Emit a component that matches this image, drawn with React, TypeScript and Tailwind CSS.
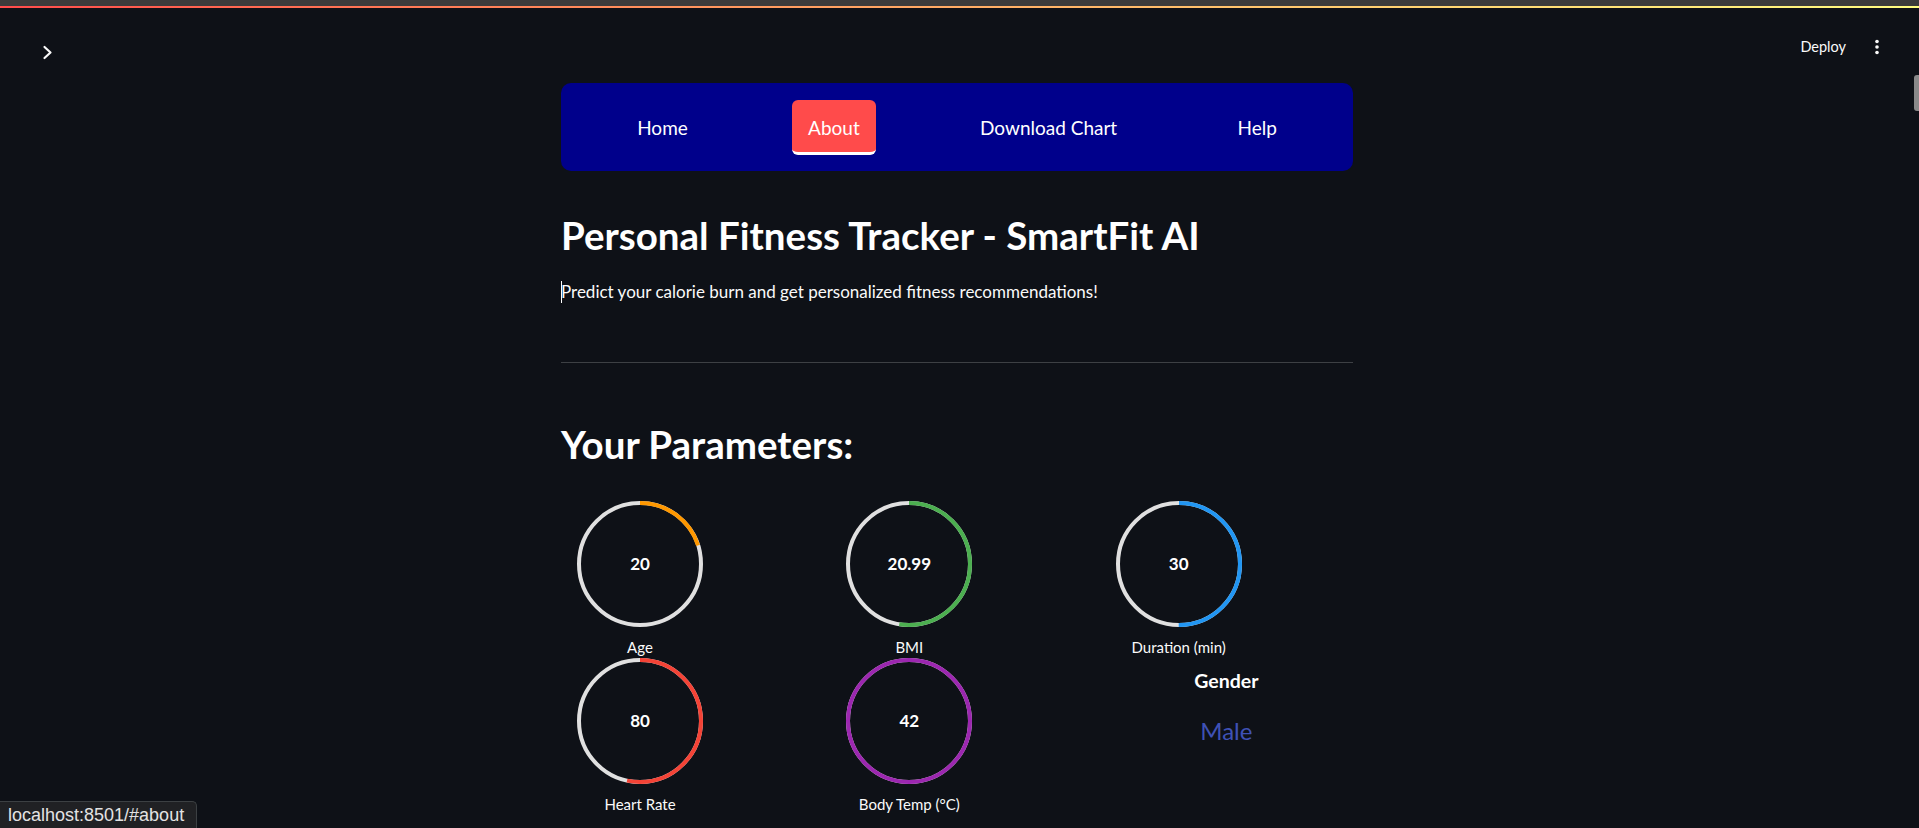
import React from 'react';

const NAV = ['Home', 'About', 'Download Chart', 'Help'];

type Gauge = { label: string; value: string; pct: number; color: string };

const ROW1: Gauge[] = [
  { label: 'Age', value: '20', pct: 20 / 100, color: '#ff9800' },
  { label: 'BMI', value: '20.99', pct: 20.99 / 40, color: '#4caf50' },
  { label: 'Duration (min)', value: '30', pct: 30 / 60, color: '#2196f3' },
];

const ROW2: Gauge[] = [
  { label: 'Heart Rate', value: '80', pct: 80 / 150, color: '#f44336' },
  { label: 'Body Temp (°C)', value: '42', pct: 1, color: '#9c27b0' },
];

const R = 61;
const C = 2 * Math.PI * R;

const Ring: React.FC<{ g: Gauge }> = ({ g }) => (
  <div className="flex w-[158px] flex-col items-center">
    <div className="relative flex h-[126px] w-[126px] items-center justify-center">
      <svg width="126" height="126" viewBox="0 0 126 126" className="absolute inset-0">
        <circle cx="63" cy="63" r={R} fill="none" stroke="#e0e0e0" strokeWidth="4" />
        <circle
          cx="63"
          cy="63"
          r={R}
          fill="none"
          stroke={g.color}
          strokeWidth="4"
          strokeDasharray={`${g.pct * C} ${C}`}
          transform="rotate(-90 63 63)"
        />
      </svg>
      <span className="text-[17px] font-bold leading-[1.2] text-white">{g.value}</span>
    </div>
    <div className="mt-[11px] text-[15px] leading-[1.2] text-[#fafafa]">{g.label}</div>
  </div>
);

export default function App() {
  return (
    <div className="relative flex h-[828px] w-full flex-col overflow-hidden bg-[#0e1117] font-['Lato',sans-serif] text-[#fafafa]">
      <div className="h-[6px] bg-[#3b3b3b]" />
      <div className="h-[2px] bg-linear-to-r from-[#ff4b4b] to-[#fffd80]" />

      {/* header overlay */}
      <div className="absolute left-0 right-0 top-[8px] flex items-start justify-between">
        <svg width="12" height="16" viewBox="0 0 12 16" className="ml-[42px] mt-[37px]">
          <polyline points="2.5,2 8.5,7.5 2.5,13" fill="none" stroke="#fafafa" strokeWidth="2.2" strokeLinecap="round" strokeLinejoin="round" />
        </svg>
        <div className="mr-[32px] mt-[29px] flex h-[20px] items-center gap-[21px]">
          <span className="text-[14.5px] leading-[1.2] text-[#fafafa]">Deploy</span>
          <svg width="20" height="20" viewBox="0 0 20 20">
            <circle cx="10" cy="4.5" r="1.8" fill="#fafafa" />
            <circle cx="10" cy="10" r="1.8" fill="#fafafa" />
            <circle cx="10" cy="15.5" r="1.8" fill="#fafafa" />
          </svg>
        </div>
      </div>

      <div className="flex flex-1">
        <main className="flex-1">
          <div className="mx-auto w-[792px] pt-[75px]">
            <nav className="flex h-[88px] items-center justify-around rounded-[10px] bg-[#00008b] px-4">
              {NAV.map((n) => (
                <div
                  key={n}
                  className={`flex h-[55px] items-center rounded-[6px] px-4 text-[19px] leading-none text-white ${
                    n === 'About' ? 'border-b-[3px] border-white bg-[#ff4b4b] pt-[3px]' : ''
                  }`}
                >
                  {n}
                </div>
              ))}
            </nav>

            <h1 className="mt-[41px] text-[38.5px] font-bold leading-[1.2] text-white">
              Personal Fitness Tracker - SmartFit AI
            </h1>

            <p className="mt-[23px] text-[17px] leading-[1.2] text-[#fafafa]">
              <span className="-mr-px inline-block h-[22px] w-px bg-white align-[-5px]" />
              Predict your calorie burn and get personalized fitness recommendations!
            </p>

            <hr className="mt-[59px] border-0 border-t border-[#3d4044]" />

            <h2 className="mt-[58px] text-[38.5px] font-bold leading-[1.2] text-white">Your Parameters:</h2>

            <div className="mt-[34px] grid grid-cols-3 gap-x-4 gap-y-[2px]">
              {ROW1.map((g) => (
                <Ring key={g.label} g={g} />
              ))}
              {ROW2.map((g) => (
                <Ring key={g.label} g={g} />
              ))}
              <div className="pt-[11px] text-center">
                <div className="text-[19.5px] font-bold leading-[1.2] text-white">Gender</div>
                <div className="mt-[24px] text-[24px] leading-[1.2] text-[#3f51b5]">Male</div>
              </div>
            </div>
          </div>
        </main>
        <div className="w-[5px] pt-[67px]">
          <div className="h-[36px] w-[5px] rounded-l-[3px] bg-[#8a8a8a]" />
        </div>
      </div>

      <div className="absolute bottom-0 left-0 flex h-[27px] items-center rounded-tr-[5px] border-r border-t border-[#3c4043] bg-[#202124] pl-[8px] pr-[12px] font-['Liberation_Sans',sans-serif] text-[18px] leading-none text-[#e3e3e3]">
        localhost:8501/#about
      </div>
    </div>
  );
}
